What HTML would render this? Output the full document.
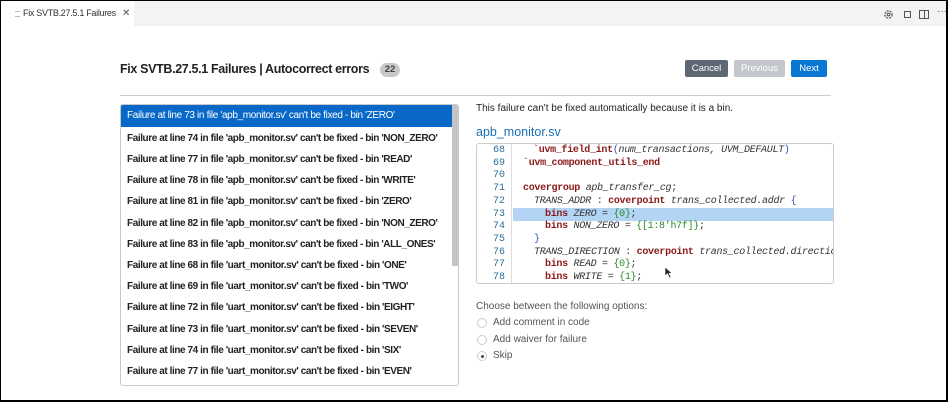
<!DOCTYPE html>
<html><head><meta charset="utf-8"><style>
*{margin:0;padding:0;box-sizing:border-box}
body{width:948px;height:402px;overflow:hidden;background:#fff;font-family:"Liberation Sans",sans-serif;position:relative}
.frame{position:absolute;left:0;top:0;width:948px;height:402px;border:1px solid #000;border-right:2px solid #000;border-bottom:2px solid #000;pointer-events:none}
.tabbar{position:absolute;left:1px;top:1px;width:945px;height:25px;background:#f3f3f3}
.tab{position:absolute;left:0;top:0;width:133px;height:25px;background:#fff;font-size:9px;color:#333;line-height:25px;padding-left:22px;letter-spacing:-0.3px}
.tab .x{position:absolute;left:121px;top:0;font-size:10px;color:#555}
.tab .ic{position:absolute;left:14px;top:10px;width:5px;height:6px;border-top:1px solid #bbb;border-bottom:1px solid #bbb}
.abs{position:absolute}
h1{position:absolute;left:120px;top:62px;font-size:12.5px;font-weight:bold;color:#222;letter-spacing:-0.35px;white-space:nowrap}
.badge{position:absolute;left:380px;top:63px;width:20px;height:14px;border-radius:7px;background:#c8c8c8;font-size:9.5px;font-weight:bold;color:#444;text-align:center;line-height:14px}
.btn{position:absolute;top:60px;height:17px;font-size:9.5px;line-height:17px;text-align:center;color:#fff;border-radius:2px}
.hr{position:absolute;left:120px;top:95px;width:711px;height:1px;background:#ccc}
.list{position:absolute;left:120px;top:104px;width:339px;height:282px;border:1px solid #c8c8c8;border-radius:3px;overflow:hidden}
.sb{position:absolute;left:331px;top:0;width:7px;height:161px;background:#c4c4c4}
.row{position:absolute;left:0;width:331px;height:21px;font-size:10px;font-weight:bold;color:#222;line-height:21px;padding-left:6px;letter-spacing:-0.42px;white-space:nowrap}
.row.sel{background:#0868c8;color:#fff;font-weight:normal;letter-spacing:-0.35px;height:22px;line-height:22px}
.code{position:absolute;left:476px;top:143px;width:358px;height:141px;border:1px solid #ccc;border-radius:3px;overflow:hidden;font-family:"Liberation Mono",monospace;font-size:10px}
.gut{position:absolute;left:0;top:0;width:35px;height:141px;border-right:1px solid #ddd}
.ln{position:absolute;left:0;width:28px;text-align:right;color:#2a6f9a;height:12.7px;line-height:12.7px}
.cl{position:absolute;left:46px;height:12.7px;line-height:12.7px;white-space:nowrap;color:#333;letter-spacing:-0.3px}
.k{color:#8b1a1a;font-weight:bold}.i{font-style:italic}.n{color:#2a8a2a}.b{color:#3050c0}
.hl{position:absolute;left:36px;top:64px;width:320px;height:12.5px;background:#b3d4f5}
.opt{position:absolute;left:476px;font-size:10px;color:#555}
.rad{position:absolute;left:477px;width:10px;height:10px;border:1px solid #ccc;border-radius:50%}
</style></head><body>
<div class="tabbar"><div class="tab"><span class="ic"></span>Fix SVTB.27.5.1 Failures<span class="x">✕</span></div>
<svg class="abs" style="left:882px;top:8px" width="11" height="11" viewBox="0 0 11 11"><circle cx="5.5" cy="5.5" r="3.6" fill="none" stroke="#555" stroke-width="1.2" stroke-dasharray="2 1"/><circle cx="5.5" cy="5.5" r="1.4" fill="none" stroke="#555"/></svg>
<div class="abs" style="left:903px;top:10px;width:7px;height:7px;border:1px solid #555"></div>
<div class="abs" style="left:918px;top:9px;width:10px;height:9px;border:1px solid #555"><div style="position:absolute;left:3.5px;top:0;width:1px;height:7px;background:#555"></div></div>
<div class="abs" style="left:936px;top:5px;font-size:10px;color:#555">···</div>
</div>
<h1>Fix SVTB.27.5.1 Failures | Autocorrect errors</h1>
<div class="badge">22</div>
<div class="btn" style="left:685px;width:43px;background:#5e6874">Cancel</div>
<div class="btn" style="left:734px;width:51px;background:#c3c7cc">Previous</div>
<div class="btn" style="left:791px;width:36px;background:#0a78d2">Next</div>
<div class="hr"></div>
<div class="list">
<div class="sb"></div>
<div class="row sel" style="top:0">Failure at line 73 in file 'apb_monitor.sv' can't be fixed - bin 'ZERO'</div>
<div class="row" style="top:23px">Failure at line 74 in file 'apb_monitor.sv' can't be fixed - bin 'NON_ZERO'</div>
<div class="row" style="top:44px">Failure at line 77 in file 'apb_monitor.sv' can't be fixed - bin 'READ'</div>
<div class="row" style="top:65px">Failure at line 78 in file 'apb_monitor.sv' can't be fixed - bin 'WRITE'</div>
<div class="row" style="top:86px">Failure at line 81 in file 'apb_monitor.sv' can't be fixed - bin 'ZERO'</div>
<div class="row" style="top:108px">Failure at line 82 in file 'apb_monitor.sv' can't be fixed - bin 'NON_ZERO'</div>
<div class="row" style="top:129px">Failure at line 83 in file 'apb_monitor.sv' can't be fixed - bin 'ALL_ONES'</div>
<div class="row" style="top:150px">Failure at line 68 in file 'uart_monitor.sv' can't be fixed - bin 'ONE'</div>
<div class="row" style="top:171px">Failure at line 69 in file 'uart_monitor.sv' can't be fixed - bin 'TWO'</div>
<div class="row" style="top:192px">Failure at line 72 in file 'uart_monitor.sv' can't be fixed - bin 'EIGHT'</div>
<div class="row" style="top:214px">Failure at line 73 in file 'uart_monitor.sv' can't be fixed - bin 'SEVEN'</div>
<div class="row" style="top:235px">Failure at line 74 in file 'uart_monitor.sv' can't be fixed - bin 'SIX'</div>
<div class="row" style="top:256px">Failure at line 77 in file 'uart_monitor.sv' can't be fixed - bin 'EVEN'</div>
</div>
<div class="abs" style="left:476px;top:103px;font-size:10px;color:#222">This failure can't be fixed automatically because it is a bin.</div>
<div class="abs" style="left:476px;top:125px;font-size:12.5px;color:#1a6fb5">apb_monitor.sv</div>
<div class="code">
<div class="hl"></div>
<div class="gut">
<div class="ln" style="top:1px">68</div><div class="ln" style="top:13.7px">69</div><div class="ln" style="top:26.4px">70</div><div class="ln" style="top:39.1px">71</div><div class="ln" style="top:51.8px">72</div><div class="ln" style="top:64.5px">73</div><div class="ln" style="top:77.2px">74</div><div class="ln" style="top:89.9px">75</div><div class="ln" style="top:102.6px">76</div><div class="ln" style="top:115.3px">77</div><div class="ln" style="top:128px">78</div>
</div>
<div class="cl" style="top:1px;left:56px"><span class="k">`uvm_field_int</span><span class="b">(</span><span class="i">num_transactions, UVM_DEFAULT</span><span class="b">)</span></div>
<div class="cl" style="top:13.7px"><span class="k">`uvm_component_utils_end</span></div>
<div class="cl" style="top:39.1px"><span class="k">covergroup</span> <span class="i">apb_transfer_cg</span>;</div>
<div class="cl" style="top:51.8px;left:57px"><span class="i">TRANS_ADDR</span> : <span class="k">coverpoint</span> <span class="i">trans_collected.addr</span> <span class="b">{</span></div>
<div class="cl" style="top:64.5px;left:68px"><span class="k">bins</span> <span class="i">ZERO</span> = <span class="n">{0}</span>;</div>
<div class="cl" style="top:77.2px;left:68px"><span class="k">bins</span> <span class="i">NON_ZERO</span> = <span class="n">{[1:8'h7f]}</span>;</div>
<div class="cl" style="top:89.9px;left:57px"><span class="b">}</span></div>
<div class="cl" style="top:102.6px;left:57px"><span class="i">TRANS_DIRECTION</span> : <span class="k">coverpoint</span> <span class="i">trans_collected.direction</span></div>
<div class="cl" style="top:115.3px;left:68px"><span class="k">bins</span> <span class="i">READ</span> = <span class="n">{0}</span>;</div>
<div class="cl" style="top:128px;left:68px"><span class="k">bins</span> <span class="i">WRITE</span> = <span class="n">{1}</span>;</div>
</div>
<svg class="abs" style="left:664px;top:266px" width="9" height="13" viewBox="0 0 9 13"><path d="M1 1 L1 10 L3.5 7.8 L5.5 12 L7 11.3 L5 7.3 L8 7.3 Z" fill="#222" stroke="#fff" stroke-width="0.6"/></svg>
<div class="opt" style="top:301px">Choose between the following options:</div>
<div class="rad" style="top:318px"></div><div class="opt" style="top:317px;left:493px">Add comment in code</div>
<div class="rad" style="top:335px"></div><div class="opt" style="top:334px;left:493px">Add waiver for failure</div>
<div class="rad" style="top:351px"><div style="position:absolute;left:3px;top:3px;width:3px;height:3px;border-radius:50%;background:#444"></div></div><div class="opt" style="top:350px;left:493px">Skip</div>
<div class="frame"></div>
</body></html>
